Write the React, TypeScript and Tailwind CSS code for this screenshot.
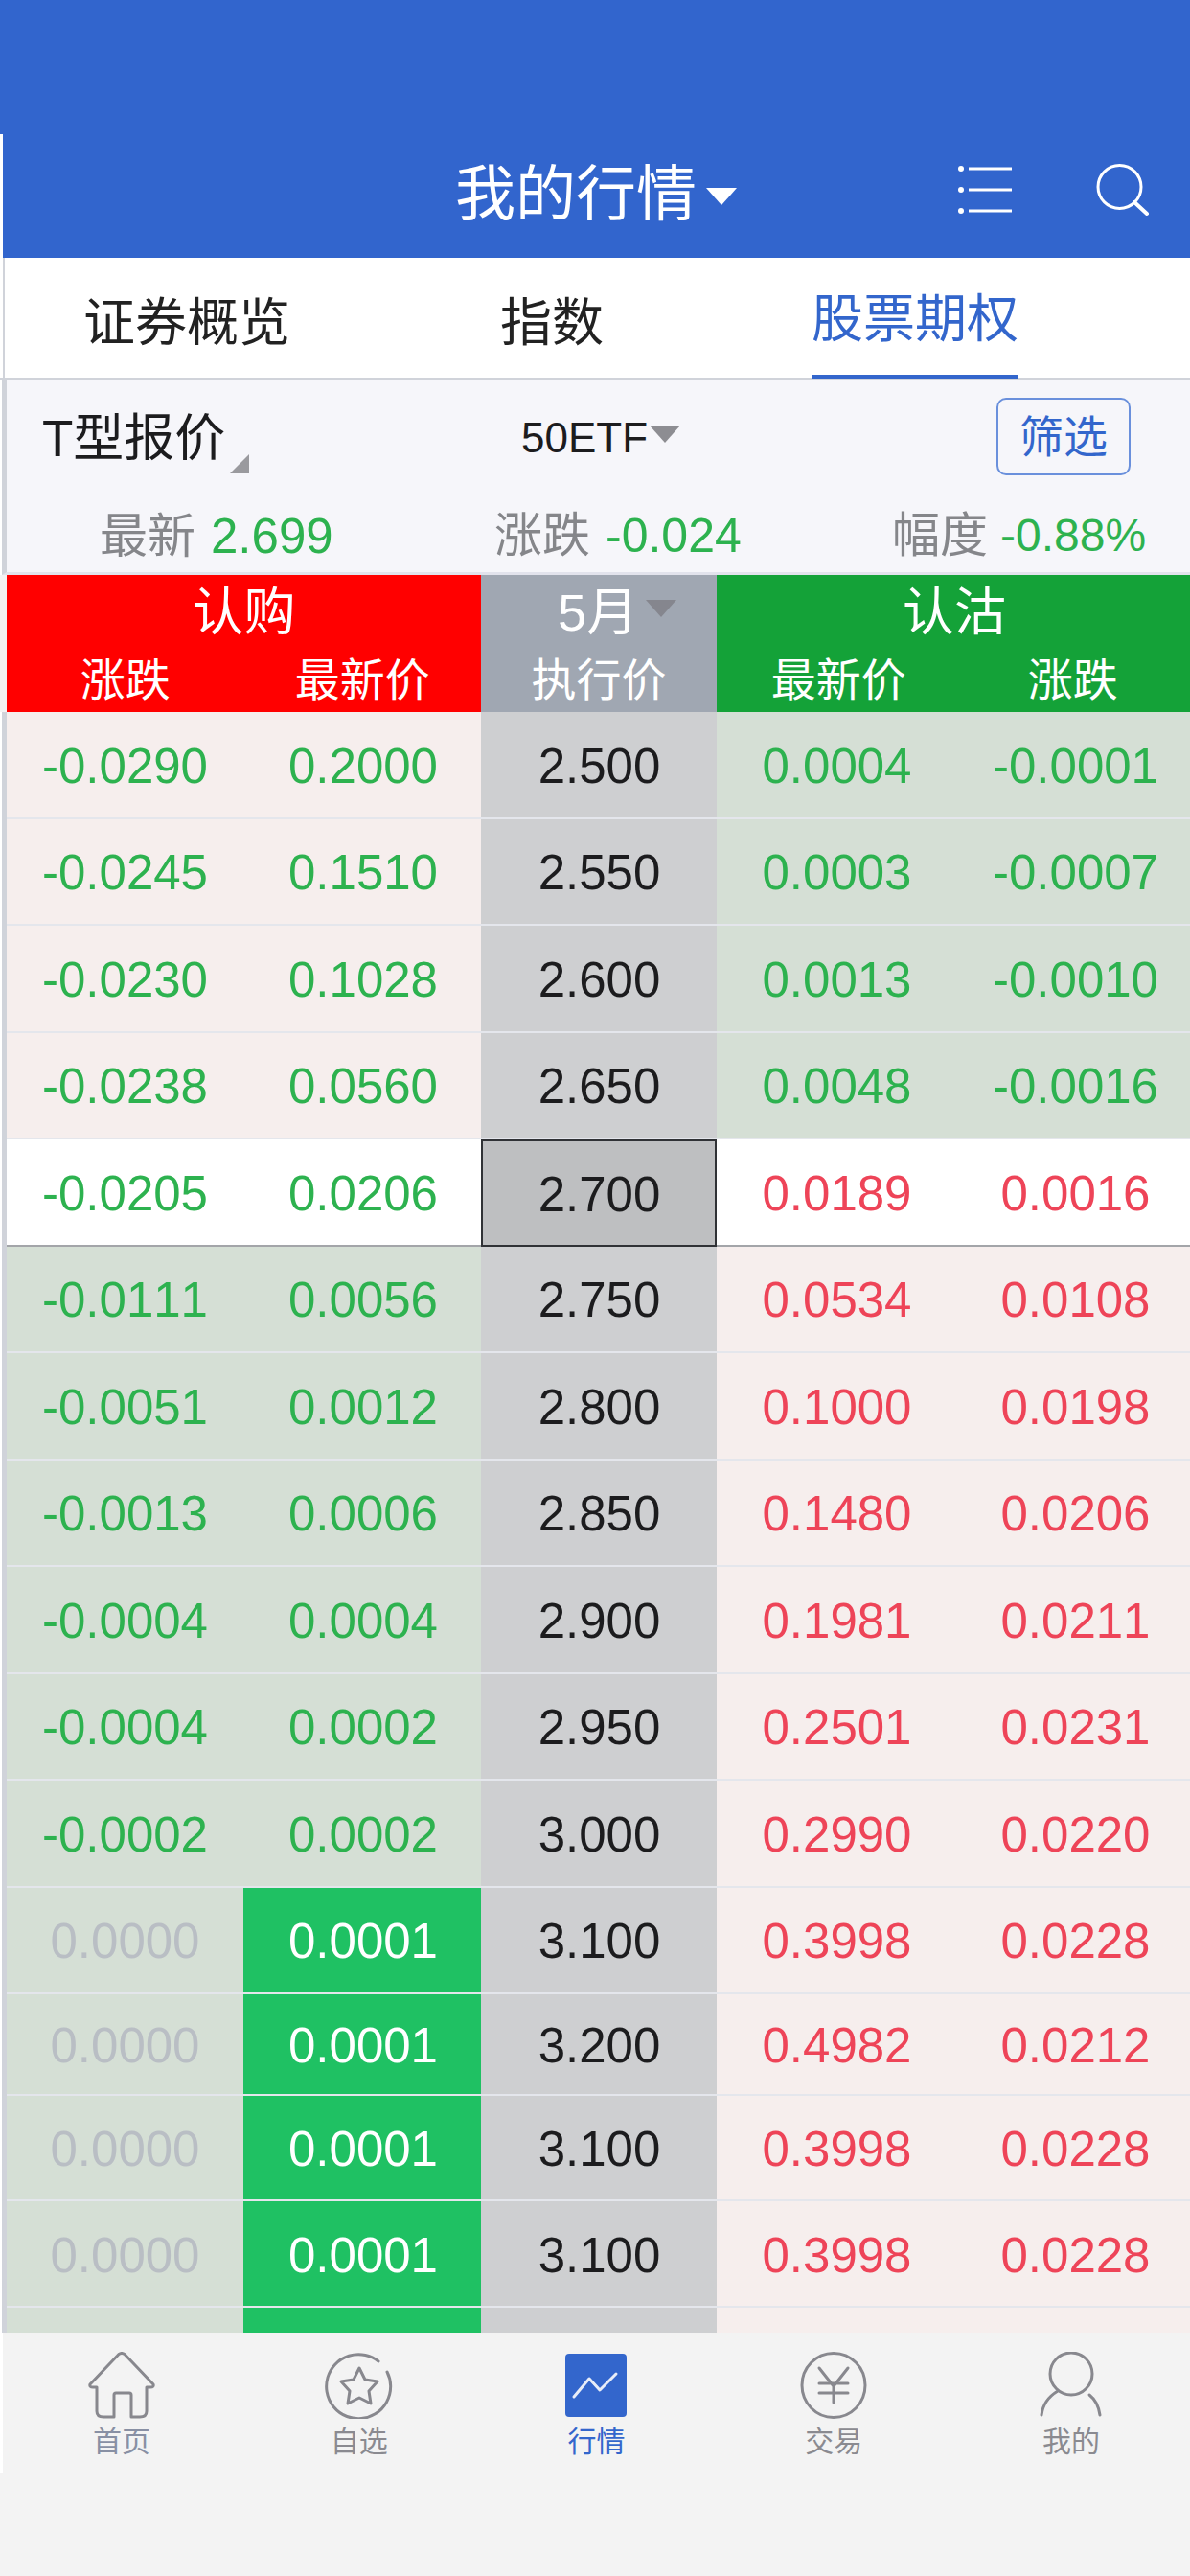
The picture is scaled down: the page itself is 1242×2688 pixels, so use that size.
import React from 'react';

type Tone = 'up' | 'down' | 'flat' | 'solid';
type Cell = [string, Tone];

interface RowData {
  callChange: Cell;
  callPrice: Cell;
  strike: string;
  putPrice: Cell;
  putChange: Cell;
  inMoney: 'put' | 'atm' | 'call';
  height: string;
}

const green = (v: string): Cell => [v, 'down'];
const red = (v: string): Cell => [v, 'up'];
const h = 'h-[111.5px]';

const rows: RowData[] = [
  { callChange: green('-0.0290'), callPrice: green('0.2000'), strike: '2.500', putPrice: green('0.0004'), putChange: green('-0.0001'), inMoney: 'put', height: h },
  { callChange: green('-0.0245'), callPrice: green('0.1510'), strike: '2.550', putPrice: green('0.0003'), putChange: green('-0.0007'), inMoney: 'put', height: h },
  { callChange: green('-0.0230'), callPrice: green('0.1028'), strike: '2.600', putPrice: green('0.0013'), putChange: green('-0.0010'), inMoney: 'put', height: h },
  { callChange: green('-0.0238'), callPrice: green('0.0560'), strike: '2.650', putPrice: green('0.0048'), putChange: green('-0.0016'), inMoney: 'put', height: h },
  { callChange: green('-0.0205'), callPrice: green('0.0206'), strike: '2.700', putPrice: red('0.0189'), putChange: red('0.0016'), inMoney: 'atm', height: h },
  { callChange: green('-0.0111'), callPrice: green('0.0056'), strike: '2.750', putPrice: red('0.0534'), putChange: red('0.0108'), inMoney: 'call', height: h },
  { callChange: green('-0.0051'), callPrice: green('0.0012'), strike: '2.800', putPrice: red('0.1000'), putChange: red('0.0198'), inMoney: 'call', height: h },
  { callChange: green('-0.0013'), callPrice: green('0.0006'), strike: '2.850', putPrice: red('0.1480'), putChange: red('0.0206'), inMoney: 'call', height: h },
  { callChange: green('-0.0004'), callPrice: green('0.0004'), strike: '2.900', putPrice: red('0.1981'), putChange: red('0.0211'), inMoney: 'call', height: h },
  { callChange: green('-0.0004'), callPrice: green('0.0002'), strike: '2.950', putPrice: red('0.2501'), putChange: red('0.0231'), inMoney: 'call', height: h },
  { callChange: green('-0.0002'), callPrice: green('0.0002'), strike: '3.000', putPrice: red('0.2990'), putChange: red('0.0220'), inMoney: 'call', height: h },
  { callChange: ['0.0000', 'flat'], callPrice: ['0.0001', 'solid'], strike: '3.100', putPrice: red('0.3998'), putChange: red('0.0228'), inMoney: 'call', height: h },
  { callChange: ['0.0000', 'flat'], callPrice: ['0.0001', 'solid'], strike: '3.200', putPrice: red('0.4982'), putChange: red('0.0212'), inMoney: 'call', height: 'h-[106px]' },
  { callChange: ['0.0000', 'flat'], callPrice: ['0.0001', 'solid'], strike: '3.100', putPrice: red('0.3998'), putChange: red('0.0228'), inMoney: 'call', height: 'h-[110px]' },
  { callChange: ['0.0000', 'flat'], callPrice: ['0.0001', 'solid'], strike: '3.100', putPrice: red('0.3998'), putChange: red('0.0228'), inMoney: 'call', height: 'h-[111px]' },
  // only the top sliver of this row shows above the tab bar
  { callChange: ['', 'flat'], callPrice: ['', 'solid'], strike: '', putPrice: ['', 'up'], putChange: ['', 'up'], inMoney: 'call', height: 'h-[111px]' },
];

const toneClass: Record<Tone, string> = {
  up: 'text-[#ee4458]',
  down: 'text-[#2db24f]',
  flat: 'text-[#b9bec4]',
  solid: 'text-white bg-[#1fc163]',
};

const PINK = 'bg-[#f6eeed]';
const SAGE = 'bg-[#d5dfd5]';

const Quote = ({ cell, bg, inset = '' }: { cell: Cell; bg: string; inset?: string }) => (
  <div className={`flex items-center justify-center pt-[3px] ${inset} ${cell[1] === 'solid' ? toneClass.solid : `${toneClass[cell[1]]} ${bg}`}`}>
    {cell[0]}
  </div>
);

const Row = ({ row }: { row: RowData }) => {
  const atm = row.inMoney === 'atm';
  const callBg = row.inMoney === 'put' ? PINK : row.inMoney === 'atm' ? 'bg-white' : SAGE;
  const putBg = row.inMoney === 'put' ? SAGE : row.inMoney === 'atm' ? 'bg-white' : PINK;
  return (
    <div
      className={`grid grid-cols-[247px_248px_246px_248px_246px] shrink-0 border-b-2 ${
        atm ? 'border-[#a3a5a9]' : 'border-[#e4e6ec]'
      } ${row.height}`}
    >
      <Quote cell={row.callChange} bg={callBg} />
      <Quote cell={row.callPrice} bg={callBg} inset="pl-[2px]" />
      <div
        className={`flex items-center justify-center pt-[3px] pl-[1px] text-[#1c1c1e] ${
          atm ? 'bg-[#bebfc1] border-2 border-[#303236] -mb-0.5' : 'bg-[#cecfd1]'
        }`}
      >
        {row.strike}
      </div>
      <Quote cell={row.putPrice} bg={putBg} inset="pl-[3px]" />
      <Quote cell={row.putChange} bg={putBg} inset="pl-[7px]" />
    </div>
  );
};

const Caret = ({ className }: { className: string }) => (
  <svg viewBox="0 0 32 18" className={className} aria-hidden="true">
    <path d="M0 0H32L16 18Z" fill="currentColor" />
  </svg>
);

const navStroke = {
  fill: 'none',
  stroke: '#88888e',
  strokeWidth: 3,
  strokeLinecap: 'round' as const,
  strokeLinejoin: 'round' as const,
};

const HomeIcon = () => (
  <svg viewBox="0 0 72 70" className="w-[72px] h-[70px]" {...navStroke}>
    <path d="M3 34 L33 2.5 Q36 0.5 39 2.5 L69 34 Q70 37 66 37 H62 V62 Q62 68 55 68 H46 V45 Q46 43 44 43 H30 Q28 43 28 45 V68 H17 Q10 68 10 62 V37 H6 Q2 37 3 34 Z" />
  </svg>
);

const StarIcon = () => (
  <svg viewBox="0 0 72 70" className="w-[72px] h-[70px]" {...navStroke}>
    <path d="M56 10 A33.5 33.5 0 1 0 65 21" />
    <path d="M36 17 L42 29 L55 31 L46 41 L48 54 L36 48 L24 54 L26 41 L17 31 L30 29 Z" />
  </svg>
);

const ChartIcon = () => (
  <svg viewBox="0 0 64 66" className="w-16 h-[66px]">
    <rect width="64" height="66" rx="4" fill="#3366cc" />
    <path d="M9 45 L25 26 L36 38 L53 21" fill="none" stroke="#e8edf8" strokeWidth="3" strokeLinecap="round" strokeLinejoin="round" />
  </svg>
);

const YenIcon = () => (
  <svg viewBox="0 0 72 70" className="w-[72px] h-[70px]" {...navStroke}>
    <ellipse cx="36" cy="35" rx="33" ry="33.5" />
    <path d="M21 17 L36 36 L51 17 M36 36 V53 M21 33 H51 M21 43 H51" />
  </svg>
);

const UserIcon = () => (
  <svg viewBox="0 0 72 70" className="w-[72px] h-[70px]" {...navStroke}>
    <ellipse cx="36" cy="23" rx="22" ry="22" />
    <path d="M22 41 Q7 50 5 66 M55 45 Q64 52 66 66" />
  </svg>
);

const navItems = [
  { label: '首页', icon: <HomeIcon />, text: 'text-[#8890a4]' },
  { label: '自选', icon: <StarIcon />, text: 'text-[#8a8a90]' },
  { label: '行情', icon: <ChartIcon />, text: 'text-[#3366cc]' },
  { label: '交易', icon: <YenIcon />, text: 'text-[#8a8a90]' },
  { label: '我的', icon: <UserIcon />, text: 'text-[#8a8a90]' },
];

const CJK = "font-['Liberation_Sans','Noto_Sans_CJK_SC',sans-serif]";

export default function App() {
  return (
    <div className={`w-[1242px] h-[2688px] overflow-hidden flex flex-col bg-[#f3f3f3] ${CJK}`}>
      {/* Blue header */}
      <div className="h-[269px] shrink-0 bg-[#3265cd] relative flex items-end">
        <div className="absolute left-0 top-[140px] bottom-0 w-[3px] bg-white" />
        <div className="flex-1 h-[129px] flex items-center text-white">
          <div className="ml-[475px] -mt-1 flex items-center text-[63px] leading-none">
            我的行情
            <Caret className="w-8 h-[18px] ml-[10px] mt-1 text-white" />
          </div>
          <svg viewBox="0 0 58 52" className="w-[58px] h-[52px] ml-[229px] mb-[13px]" aria-hidden="true">
            <g fill="#fff">
              <circle cx="5" cy="4" r="3" />
              <circle cx="5" cy="26" r="3" />
              <circle cx="5" cy="48" r="3" />
              <rect x="13" y="2.5" width="45" height="3" />
              <rect x="13" y="24.5" width="45" height="3" />
              <rect x="13" y="46.5" width="45" height="3" />
            </g>
          </svg>
          <svg viewBox="0 0 56 56" className="w-14 h-14 ml-[87px] mb-[13px]" aria-hidden="true">
            <circle cx="25.5" cy="25" r="22.5" fill="none" stroke="#fff" strokeWidth="3" />
            <path d="M41 41 L54 53" stroke="#fff" strokeWidth="4" strokeLinecap="round" />
          </svg>
        </div>
      </div>

      {/* Tabs */}
      <div className="h-[128px] shrink-0 bg-white relative flex items-center text-[54px] text-[#222] border-b-[3px] border-b-[#d0d3da]">
        <div className="absolute left-[3px] top-0 bottom-0 w-[2px] bg-[#d0d3da]" />
        <span className="ml-[87px] leading-none mt-[10px]">证券概览</span>
        <span className="ml-[219px] leading-none mt-[10px]">指数</span>
        <div className="ml-[217px] self-stretch w-[216px] flex items-center justify-center text-[#3366cc] border-b-[4px] border-[#3366cc] -mb-[1px]">
          <span className="leading-none mt-[6px]">股票期权</span>
        </div>
      </div>

      {/* Quote panel */}
      <div className="h-[203px] shrink-0 bg-white pl-[2px]">
        <div className="h-full bg-[#f6f6fa] border-l-[5px] border-l-[#d0d3da] border-b-[3px] border-b-[#e2e3ec] flex flex-col">
          <div className="h-[118px] flex items-center relative">
            <div className="ml-[37px] mt-[2px] flex text-[53px] leading-none text-[#1c1c1e] relative">
              T型报价
              <svg viewBox="0 0 20 20" className="absolute w-5 h-5 -right-[25px] bottom-[-10px]" aria-hidden="true">
                <path d="M20 0V20H0Z" fill="#9a9a9e" />
              </svg>
            </div>
            <div className="absolute left-[537px] mt-[2px] flex items-center text-[44px] leading-none text-[#1c1c1e]">
              50ETF
              <Caret className="w-8 h-[18px] ml-[2px] mb-2 text-[#8d8d92]" />
            </div>
            <div className="absolute left-[1033px] top-[18px] w-[140px] h-[81px] flex items-center justify-center border-2 border-[#6a90dc] rounded-[10px] text-[#3366cc] text-[46px] leading-none">
              筛选
            </div>
          </div>
          <div className="flex-1 relative leading-none">
            <div className="absolute left-[97px] top-[19px] flex items-center gap-4">
              <span className="text-[#85868a] text-[50px]">最新</span>
              <span className="text-[#2db24f] text-[51px]">2.699</span>
            </div>
            <div className="absolute left-[509px] top-[19px] flex items-center gap-4">
              <span className="text-[#85868a] text-[50px]">涨跌</span>
              <span className="text-[#2db24f] text-[50px]">-0.024</span>
            </div>
            <div className="absolute left-[924px] top-[19px] flex items-center gap-[13px]">
              <span className="text-[#85868a] text-[50px]">幅度</span>
              <span className="text-[#2db24f] text-[48px]">-0.88%</span>
            </div>
          </div>
        </div>
      </div>

      {/* Table head */}
      <div className="h-[143px] shrink-0 ml-[7px] grid grid-cols-[495px_246px_494px] text-white leading-none">
        <div className="bg-[#ff0000] flex flex-col">
          <div className="text-center text-[54px] mt-3">认购</div>
          <div className="grid grid-cols-2 text-center text-[47px] mt-5">
            <span>涨跌</span>
            <span>最新价</span>
          </div>
        </div>
        <div className="bg-[#a0a7b2] flex flex-col items-center">
          <div className="flex items-center text-[54px] mt-3 ml-[38px]">
            5月
            <Caret className="w-8 h-[18px] ml-2 mb-2 text-[#85868e]" />
          </div>
          <div className="text-[47px] mt-5">执行价</div>
        </div>
        <div className="bg-[#14a238] flex flex-col">
          <div className="text-center text-[54px] mt-3 pl-[2px]">认沽</div>
          <div className="grid grid-cols-2 text-center text-[47px] mt-5 ml-[5px]">
            <span>最新价</span>
            <span>涨跌</span>
          </div>
        </div>
      </div>

      {/* Table body */}
      <div className="h-[1691px] shrink-0 overflow-hidden bg-white pl-[2px]">
        <div className="h-full overflow-hidden border-l-[5px] border-[#d0d3da] flex flex-col text-[51px] leading-none [font-kerning:none] font-['Liberation_Sans',sans-serif]">
          {rows.map((row, i) => (
            <Row key={i} row={row} />
          ))}
        </div>
      </div>

      {/* Bottom nav */}
      <div className="flex-1 relative bg-[#f3f3f3]">
        <div className="absolute left-0 top-0 h-[147px] w-[3px] bg-white" />
        <div className="grid grid-cols-5 pt-5 pl-[3px]">
          {navItems.map((item) => (
            <div key={item.label} className="flex flex-col items-center">
              <div className="h-[70px] flex items-center">{item.icon}</div>
              <span className={`mt-[9px] text-[30px] leading-none ${item.text}`}>{item.label}</span>
            </div>
          ))}
        </div>
      </div>
    </div>
  );
}
